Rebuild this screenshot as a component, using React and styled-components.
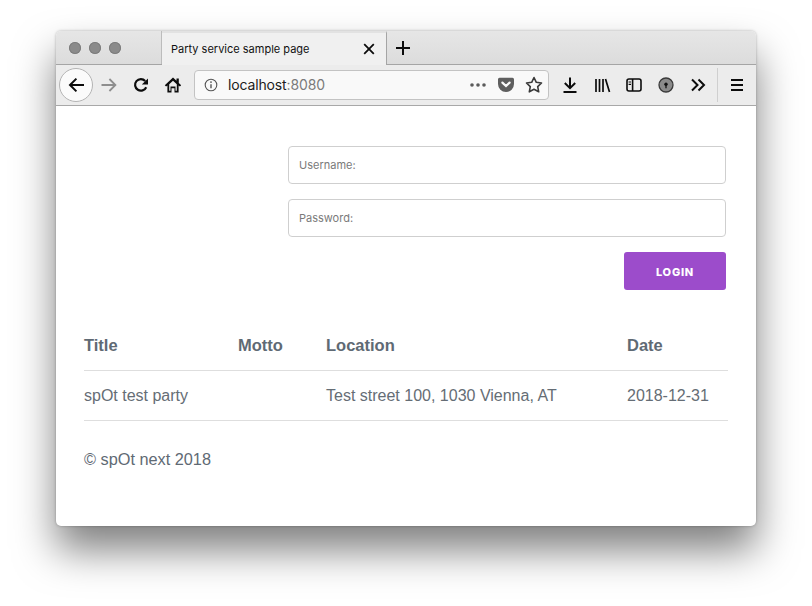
import React from 'react';
import styled, { createGlobalStyle } from 'styled-components';

const GlobalStyle = createGlobalStyle`
  html, body {
    margin: 0;
    background: #ffffff;
    overflow: hidden;
  }
`;

const Stage = styled.div`
  width: 812px;
  height: 606px;
  padding: 31px 56px 0;
  box-sizing: border-box;
`;

const Window = styled.div`
  width: 700px;
  height: 495px;
  display: flex;
  flex-direction: column;
  border-radius: 5px;
  overflow: hidden;
  background: #ffffff;
  box-shadow: 0 24px 40px rgba(0, 0, 0, 0.5), 0 0 3px rgba(0, 0, 0, 0.28);
`;

const TabStrip = styled.div`
  height: 33px;
  display: flex;
  align-items: stretch;
  background: linear-gradient(#e6e6e6, #dcdcdc);
  border-bottom: 1px solid #a5a5a5;
`;

const Lights = styled.div`
  width: 106px;
  padding-left: 13px;
  box-sizing: border-box;
  display: flex;
  align-items: center;
  gap: 8px;
  border-right: 1px solid #bcbcbc;
`;

const Light = styled.span`
  width: 12px;
  height: 12px;
  border-radius: 50%;
  background: #8b8b8b;
  box-shadow: inset 0 0 0 1px #7d7d7d;
`;

const Tab = styled.div`
  width: 225px;
  margin-bottom: -1px;
  padding: 0 8px 0 9px;
  box-sizing: border-box;
  display: flex;
  align-items: center;
  justify-content: space-between;
  background: #f0f0f0;
  border-top: 2px solid #e2e2e2;
  border-right: 1px solid #a5a5a5;
`;

const TabTitle = styled.span`
  font: 11px/1 "Inter", "Liberation Sans", sans-serif;
  color: #111111;
`;

const NewTab = styled.div`
  width: 32px;
  display: flex;
  align-items: center;
  justify-content: center;
`;

const Toolbar = styled.div`
  height: 40px;
  display: flex;
  align-items: center;
  padding-left: 3px;
  background: #ececec;
  border-bottom: 1px solid #a8a8a8;
`;

const BackButton = styled.div`
  width: 34px;
  height: 34px;
  box-sizing: border-box;
  display: flex;
  align-items: center;
  justify-content: center;
  border-radius: 50%;
  background: #fbfbfb;
  border: 1px solid #b4b4b4;
`;

const ToolIcon = styled.div`
  width: 32px;
  height: 32px;
  flex: none;
  display: flex;
  align-items: center;
  justify-content: center;
`;

const NavIcons = styled.div`
  display: flex;
  margin-right: 5px;
`;

const UrlBar = styled.div`
  width: 355px;
  height: 30px;
  flex: none;
  box-sizing: border-box;
  display: flex;
  align-items: center;
  padding: 0 0 0 9px;
  background: #f9f9f9;
  border: 1px solid #c3c3c3;
  border-radius: 4px;
`;

const Host = styled.span`
  margin-left: 10px;
  flex: 1;
  font: 14px/1 "Inter", "Liberation Sans", sans-serif;
  letter-spacing: -0.01em;
  color: #1c1c1c;
`;

const Port = styled.span`
  color: #7b7b7b;
`;

const UrlAction = styled.div`
  width: 28px;
  height: 28px;
  display: flex;
  align-items: center;
  justify-content: center;
`;

const ToolGroup = styled.div`
  display: flex;
  margin-left: 5px;
`;

const Separator = styled.div`
  width: 1px;
  height: 34px;
  margin: 0 3px;
  background: #cfcfcf;
`;

const Page = styled.main`
  flex: 1;
  padding: 40px 28px 0;
  font-family: "Liberation Sans", Arial, sans-serif;
  color: #5d6872;
`;

const LoginForm = styled.form`
  width: 438px;
  margin-left: 204px;
  display: flex;
  flex-direction: column;
  gap: 15px;
`;

const Field = styled.div`
  height: 38px;
  box-sizing: border-box;
  display: flex;
  align-items: center;
  padding: 1px 0 0 10px;
  border: 1px solid #cfcfcf;
  border-radius: 4px;
  font: 11px/1 "Inter", "Liberation Sans", sans-serif;
  color: #7a7a7a;
`;

const LoginButton = styled.div`
  width: 102px;
  height: 38px;
  padding-top: 2px;
  box-sizing: border-box;
  align-self: flex-end;
  display: flex;
  align-items: center;
  justify-content: center;
  background: #9c4ccb;
  border-radius: 3px;
  font: 800 11px/1 "Inter", "Liberation Sans", sans-serif;
  letter-spacing: 0.07em;
  color: #ffffff;
`;

const Table = styled.div`
  width: 644px;
  margin-top: 30px;
  display: grid;
  grid-template-columns: 154px 88px 301px 101px;
`;

const HeadCell = styled.div`
  height: 51px;
  box-sizing: border-box;
  display: flex;
  align-items: center;
  border-bottom: 1px solid #dedede;
  font-size: 16.5px;
  font-weight: 700;
  color: #5f6a74;
`;

const Cell = styled.div`
  height: 50px;
  box-sizing: border-box;
  display: flex;
  align-items: center;
  border-bottom: 1px solid #dedede;
  font-size: 16px;
  color: #656d75;
`;

const Footer = styled.footer`
  margin-top: 29px;
  font-size: 16.3px;
  line-height: 18px;
  color: #5f6a74;
`;

const Line = ({ d, w = 2, color = '#0c0c0c', size = 18 }) => (
  <svg width={size} height={size} viewBox="0 0 18 18" fill="none">
    <path d={d} stroke={color} strokeWidth={w} />
  </svg>
);

const ReloadIcon = () => (
  <svg width="18" height="18" viewBox="0 0 18 18" fill="none">
    <path d="M14.2 11.2A5.8 5.8 0 1 1 13.2 5" stroke="#0c0c0c" strokeWidth="2.2" />
    <path d="M16 2.400v6.200H9.800z" fill="#0c0c0c" />
  </svg>
);

const HomeIcon = () => (
  <svg width="18" height="18" viewBox="0 0 18 18">
    <path d="M9 1.500.8 9.200l1.300 1.400 1.300-1.200V16.500h4.100v-4.300h3v4.300h4.100V9.400l1.300 1.200 1.300-1.400L14.800 6.900V2.500h-2.300v2.200z" fill="#0c0c0c" />
    <path d="M9 4.700 5.200 8.200v6.500h1.300v-4.200h5v4.200h1.300V8.200z" fill="#ececec" />
  </svg>
);

const InfoIcon = () => (
  <svg width="14" height="14" viewBox="0 0 14 14" fill="none">
    <circle cx="7" cy="7" r="5.8" stroke="#555555" strokeWidth="1.1" />
    <path d="M7 6.200v4" stroke="#555555" strokeWidth="1.4" />
    <circle cx="7" cy="4.100" r="0.9" fill="#555555" />
  </svg>
);

const DotsIcon = () => (
  <svg width="18" height="6" viewBox="0 0 18 6">
    <circle cx="3" cy="3" r="1.8" fill="#5b5b5b" />
    <circle cx="9" cy="3" r="1.8" fill="#5b5b5b" />
    <circle cx="15" cy="3" r="1.8" fill="#5b5b5b" />
  </svg>
);

const PocketIcon = () => (
  <svg width="18" height="16" viewBox="0 0 18 16" fill="none">
    <path d="M2.500.8h13A1.800 1.800 0 0 1 17 2.600V7A8 8 0 0 1 1 7V2.600A1.800 1.800 0 0 1 2.500.8z" fill="#5f5f5f" />
    <path d="M5.400 5.600 9 9l3.600-3.400" stroke="#f9f9f9" strokeWidth="2.200" strokeLinecap="round" />
  </svg>
);

const StarIcon = () => (
  <svg width="18" height="18" viewBox="0 0 18 18" fill="none">
    <path
      d="M9 1.500l2.300 4.800 5.200.7-3.800 3.600 1 5.200L9 13.300l-4.700 2.500 1-5.200L1.500 7l5.200-.7z"
      stroke="#3a3a3a"
      strokeWidth="1.600"
      strokeLinejoin="round"
    />
  </svg>
);

const SidebarIcon = () => (
  <svg width="18" height="18" viewBox="0 0 18 18" fill="none">
    <rect x="2" y="3" width="14" height="12" rx="2" stroke="#0c0c0c" strokeWidth="1.600" />
    <path d="M7.600 3v12" stroke="#0c0c0c" strokeWidth="1.600" />
    <path d="M3.600 6h2.400M3.600 8.400h2.400" stroke="#0c0c0c" strokeWidth="1.200" />
  </svg>
);

const KeyIcon = () => (
  <svg width="18" height="18" viewBox="0 0 18 18" fill="none">
    <circle cx="9" cy="9" r="7" fill="#8a8a8a" stroke="#3a3a3a" strokeWidth="1.300" />
    <circle cx="9" cy="8.200" r="1.700" fill="#111111" />
    <path d="M9 8.200v4" stroke="#111111" strokeWidth="1.300" />
  </svg>
);

const App = () => (
  <Stage>
    <GlobalStyle />
    <Window>
      <TabStrip>
        <Lights>
          <Light />
          <Light />
          <Light />
        </Lights>
        <Tab>
          <TabTitle>Party service sample page</TabTitle>
          <Line d="M4.200 4.200l9.600 9.600M13.800 4.200l-9.600 9.600" w={1.8} />
        </Tab>
        <NewTab>
          <Line d="M9 2v14M2 9h14" />
        </NewTab>
      </TabStrip>

      <Toolbar>
        <BackButton>
          <Line d="M17 9H3M9.400 2.600 3 9l6.400 6.400" w={2} />
        </BackButton>
        <NavIcons>
          <ToolIcon>
            <Line d="M1.500 9h14M9.400 3l6 6-6 6" w={1.8} color="#8e8e8e" />
          </ToolIcon>
          <ToolIcon>
            <ReloadIcon />
          </ToolIcon>
          <ToolIcon>
            <HomeIcon />
          </ToolIcon>
        </NavIcons>
        <UrlBar>
          <InfoIcon />
          <Host>
            localhost<Port>:8080</Port>
          </Host>
          <UrlAction>
            <DotsIcon />
          </UrlAction>
          <UrlAction>
            <PocketIcon />
          </UrlAction>
          <UrlAction>
            <StarIcon />
          </UrlAction>
        </UrlBar>
        <ToolGroup>
          <ToolIcon>
            <Line d="M9 1.500v10.500M3.800 7 9 12.200 14.200 7M2.500 16h13" />
          </ToolIcon>
          <ToolIcon>
            <Line d="M3 3v13M6.500 3v13M10 3v13M12.500 3l4 13" w={1.7} />
          </ToolIcon>
          <ToolIcon>
            <SidebarIcon />
          </ToolIcon>
          <ToolIcon>
            <KeyIcon />
          </ToolIcon>
          <ToolIcon>
            <Line d="M3 3.500 8.500 9 3 14.500M9.500 3.500 15 9l-5.500 5.500" />
          </ToolIcon>
        </ToolGroup>
        <Separator />
        <ToolIcon>
          <Line d="M3 4h12M3 9h12M3 14h12" />
        </ToolIcon>
      </Toolbar>

      <Page>
        <LoginForm>
          <Field>Username:</Field>
          <Field>Password:</Field>
          <LoginButton>LOGIN</LoginButton>
        </LoginForm>

        <Table>
          <HeadCell>Title</HeadCell>
          <HeadCell>Motto</HeadCell>
          <HeadCell>Location</HeadCell>
          <HeadCell>Date</HeadCell>
          <Cell>spOt test party</Cell>
          <Cell />
          <Cell>Test street 100, 1030 Vienna, AT</Cell>
          <Cell>2018-12-31</Cell>
        </Table>

        <Footer>© spOt next 2018</Footer>
      </Page>
    </Window>
  </Stage>
);

export default App;
